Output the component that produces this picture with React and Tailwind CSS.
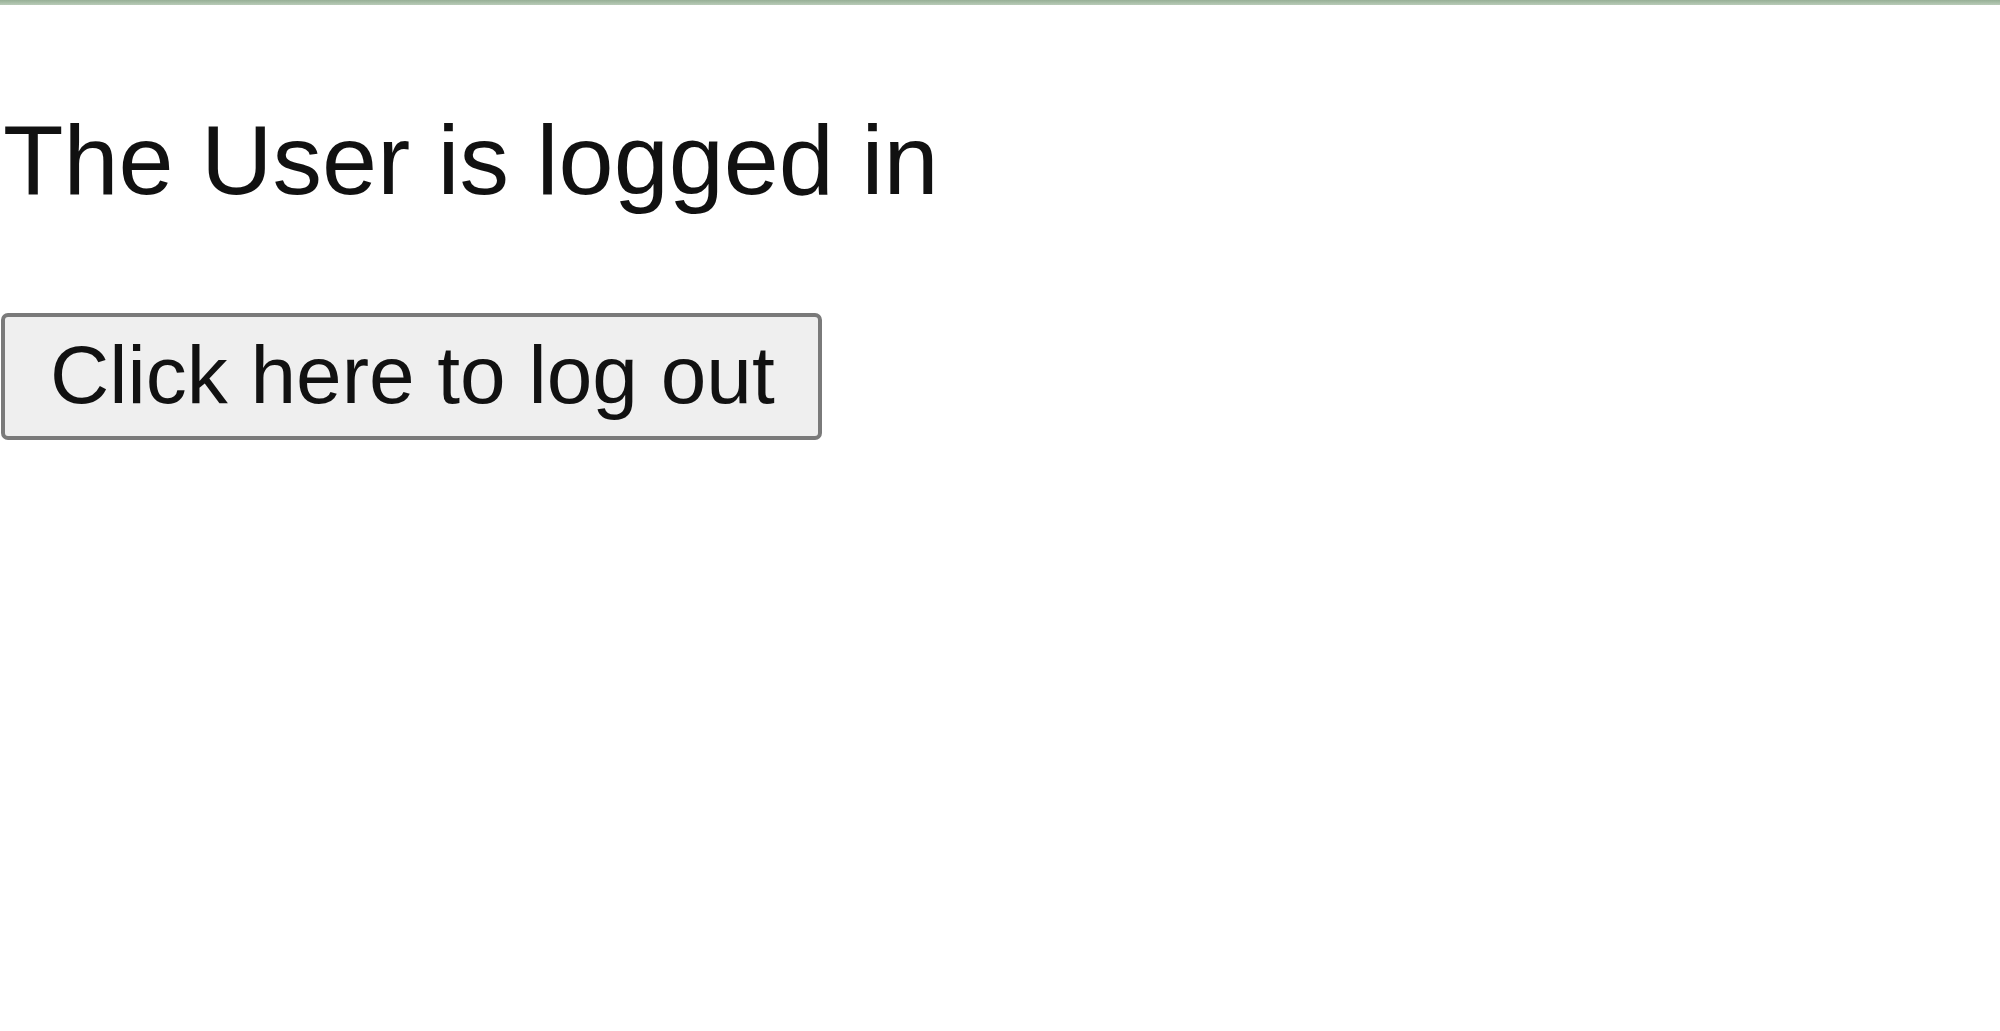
import React from "react";

const App = () => {
  return (
    <div className="min-h-[1031px] w-full bg-white font-['Liberation_Sans',Arial,sans-serif] text-[#111]">
      <div className="h-[5px] w-full bg-gradient-to-b from-[#97b096] to-[#b9cbb8]" />
      <p className="mt-[98px] pl-[3px] text-[99px] leading-[1.15]">
        The User is logged in
      </p>
      <button
        type="button"
        className="mt-[96px] ml-px w-[821px] rounded-[7px] border-4 border-[#7a7a7a] bg-[#efefef] pt-[11px] pb-[14px] pl-[45px] text-left text-[82px] leading-[1.15] text-[#111]"
      >
        Click here to log out
      </button>
    </div>
  );
};

export default App;
